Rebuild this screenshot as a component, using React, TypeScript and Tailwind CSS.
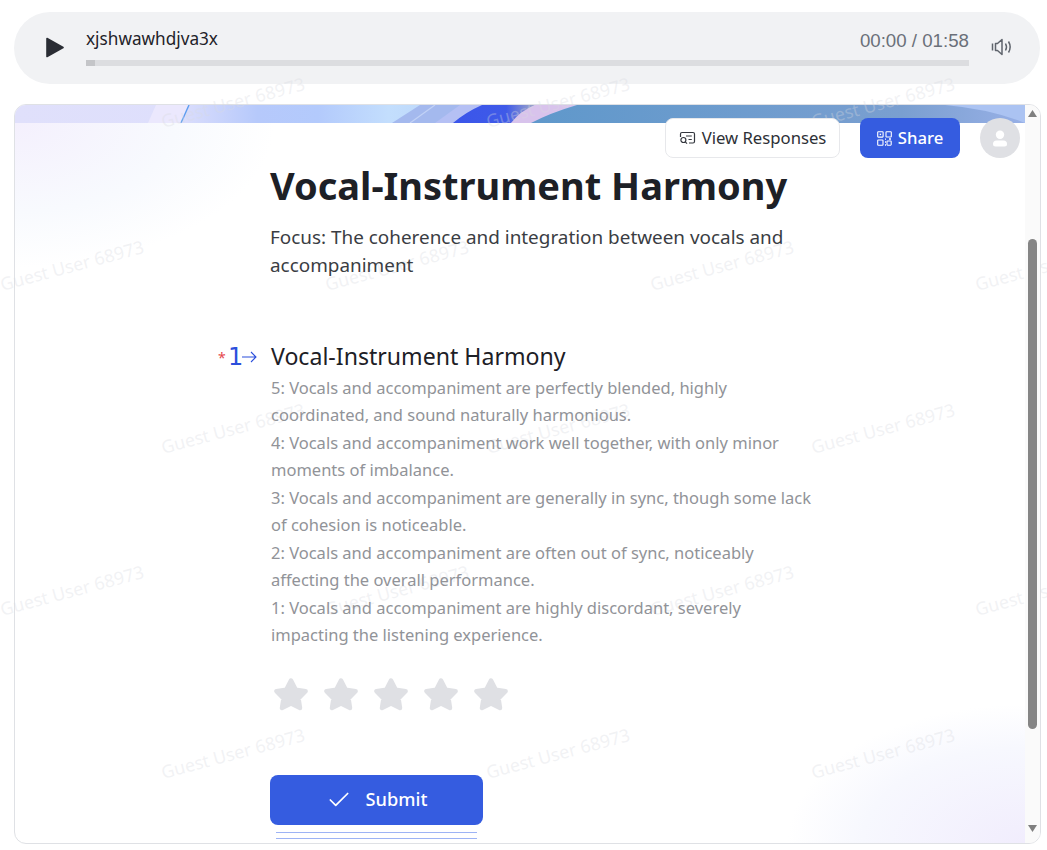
import { Check } from "lucide-react";

const WATERMARK_ROWS = [
  { top: 90, lefts: [159, 484, 809] },
  { top: 253, lefts: [-2, 323, 648, 973] },
  { top: 416, lefts: [159, 484, 809] },
  { top: 578, lefts: [-2, 323, 648, 973] },
  { top: 741, lefts: [159, 484, 809] },
];

const SCALE_LINES = [
  "5: Vocals and accompaniment are perfectly blended, highly coordinated, and sound naturally harmonious.",
  "4: Vocals and accompaniment work well together, with only minor moments of imbalance.",
  "3: Vocals and accompaniment are generally in sync, though some lack of cohesion is noticeable.",
  "2: Vocals and accompaniment are often out of sync, noticeably affecting the overall performance.",
  "1: Vocals and accompaniment are highly discordant, severely impacting the listening experience.",
];

function Watermarks() {
  return (
    <div className="pointer-events-none absolute inset-0 z-20 overflow-hidden">
      {WATERMARK_ROWS.map((row) =>
        row.lefts.map((left) => (
          <span
            key={`${row.top}-${left}`}
            className="absolute -rotate-[15deg] whitespace-nowrap text-[17.8px] leading-6 text-[#d8dae0]/35"
            style={{ top: row.top, left }}
          >
            Guest User 68973
          </span>
        ))
      )}
    </div>
  );
}

function Banner() {
  return (
    <svg className="block h-[18px] w-full" viewBox="0 0 1010 18" preserveAspectRatio="none">
      <defs>
        <linearGradient id="bannerGrad" x1="0" x2="1" y1="0" y2="0">
          <stop offset="0" stopColor="#e0e0fb" />
          <stop offset="0.16" stopColor="#dedffc" />
          <stop offset="0.24" stopColor="#b6c9fb" />
          <stop offset="0.3" stopColor="#b3cafc" />
          <stop offset="0.37" stopColor="#c3defd" />
          <stop offset="0.45" stopColor="#b9d4f8" />
        </linearGradient>
        <linearGradient id="bannerBlue" x1="0" x2="1" y1="0" y2="0">
          <stop offset="0" stopColor="#5f98cb" />
          <stop offset="0.75" stopColor="#7a9fd0" />
          <stop offset="1" stopColor="#98b0e6" />
        </linearGradient>
        <linearGradient id="bannerInk" x1="0" x2="1" y1="0" y2="0">
          <stop offset="0" stopColor="#3a55ea" />
          <stop offset="0.65" stopColor="#3f5ae8" />
          <stop offset="1" stopColor="#a3a9c8" />
        </linearGradient>
      </defs>
      <rect width="1010" height="18" fill="url(#bannerGrad)" />
      <path d="M133 18 L141 0 L174 0 L166 18Z" fill="#ebe8fd" />
      <path d="M166 18 L174 0" stroke="#5d9df0" strokeWidth="1.4" />
      <path d="M377 18 L405 0 L480 0 L440 18Z" fill="#a4b9ee" />
      <path d="M395 18 L420 0" stroke="#c2d2f6" strokeWidth="1.2" />
      <path d="M420 18 L445 0 L480 0 L445 18Z" fill="#b5c0f4" />
      <path d="M438 18 Q451 7 467 0 L520 0 Q508 6 500 18Z" fill="url(#bannerInk)" />
      <path d="M496 18 Q505 6 520 0 L562 0 Q535 8 520 18Z" fill="#d8c3ec" />
      <path d="M516 18 Q535 8 562 0 L1010 0 L1010 18Z" fill="url(#bannerBlue)" />
      <path d="M930 0 Q975 4 1010 18 L1010 0Z" fill="#abc3f2" />
    </svg>
  );
}

function ScrollBar() {
  return (
    <div className="relative z-30 flex w-[15px] shrink-0 flex-col items-center bg-[#fafafa]">
      <svg className="mt-[5px] shrink-0" width="9" height="8" viewBox="0 0 9 8">
        <path d="M4.5 0 L9 7 L0 7Z" fill="#7f7f7f" />
      </svg>
      <div className="mt-[121px] h-[490px] w-[9px] shrink-0 rounded-full bg-[#858585]" />
      <svg className="mt-[95px] shrink-0" width="9" height="8" viewBox="0 0 9 8">
        <path d="M0 1 L9 1 L4.5 8Z" fill="#7f7f7f" />
      </svg>
    </div>
  );
}

function ReviewIcon() {
  return (
    <svg width="17" height="17" viewBox="0 0 17 17" fill="none" stroke="#33363d" strokeWidth="1.2">
      <path d="M1.5 7 V4 Q1.5 2.5 3 2.5 H14 Q15.5 2.5 15.5 4 V11.5 Q15.5 13 14 13 H10" />
      <circle cx="4.4" cy="10" r="2.5" />
      <path d="M6.3 11.9 L8 13.6" />
      <path d="M7 6 H12.8 M9.5 9.5 H12.8" />
    </svg>
  );
}

function QrIcon() {
  return (
    <svg width="15" height="15" viewBox="0 0 15 15" fill="none" stroke="#ffffff" strokeWidth="1.1">
      <rect x="0.7" y="0.7" width="5.4" height="5.4" rx="0.6" />
      <rect x="2.7" y="2.7" width="1.4" height="1.4" fill="#ffffff" stroke="none" />
      <rect x="9" y="0.7" width="5.3" height="5.3" rx="0.6" />
      <rect x="0.7" y="9" width="5.3" height="5.3" rx="0.6" />
      <rect x="10" y="10" width="4.2" height="4.2" rx="0.6" />
      <path d="M8 8.2 H9 M8 11 H9 M8 14 H9 M12 8 H14" strokeWidth="1.3" />
    </svg>
  );
}

function VolumeIcon() {
  return (
    <svg width="22" height="22" viewBox="0 0 22 22" fill="none" stroke="#5f646c" strokeWidth="1.5">
      <path d="M1.5 7.5 V14.5" />
      <path d="M4.5 7.5 H6.5 L11 3.5 V18.5 L6.5 14.5 H4.5Z" strokeLinejoin="round" />
      <path d="M14.5 7.5 Q16.5 11 14.5 14.5" />
      <path d="M17.5 5.5 Q20.8 11 17.5 16.5" />
    </svg>
  );
}

function Star() {
  return (
    <svg width="40" height="40" viewBox="0 0 40 40">
      <path
        d="M20 6.5 L24.6 15.6 L34.6 17.2 L27.5 24.4 L29 34 L20 29.6 L11 34 L12.5 24.4 L5.4 17.2 L15.4 15.6Z"
        fill="#dfe0e4"
        stroke="#dfe0e4"
        strokeWidth="4.5"
        strokeLinejoin="round"
      />
    </svg>
  );
}

export default function App() {
  return (
    <main className="relative flex h-[850px] w-full flex-col overflow-hidden bg-white px-[14px] pt-3 font-['Noto_Sans',sans-serif]">

      {/* AUDIO BAR */}

      <section className="flex h-[72px] w-[1026px] shrink-0 items-center rounded-[36px] bg-[#f1f2f4] pl-[32px] pr-[27px]">
        <svg className="mb-[2px] shrink-0" width="18" height="21" viewBox="0 0 18 21">
          <path d="M1 1.5 L17 10.5 L1 19.5Z" fill="#2a2d34" stroke="#2a2d34" strokeWidth="1.6" strokeLinejoin="round" />
        </svg>
        <div className="ml-[22px] flex min-w-0 flex-1 flex-col self-start pt-[15px]">
          <div className="flex h-6 items-center justify-between">
            <span className="text-[17.2px] leading-6 text-[#1f2329]">xjshwawhdjva3x</span>
            <span className="pt-[3px] font-['Liberation_Sans',sans-serif] text-[18.7px] leading-6 text-[#6a7079]">00:00 / 01:58</span>
          </div>
          <div className="mt-[9px] h-[6px] w-full bg-[#dcdde0]">
            <div className="h-full w-[9px] bg-[#c4c5c8]" />
          </div>
        </div>
        <div className="mb-[2px] ml-[22px] shrink-0">
          <VolumeIcon />
        </div>
      </section>

      {/* FORM PANEL */}

      <section className="relative mt-5 flex h-[740px] w-[1027px] shrink-0 overflow-hidden rounded-xl border border-[#dfe1e5] bg-white">
        <div className="relative min-w-0 flex-1 overflow-hidden">
          <Banner />

          <div className="absolute left-0 top-[18px] h-[150px] w-[270px] bg-[radial-gradient(ellipse_at_top_left,#f4f0fd_0%,#f8fafe_42%,#ffffff_68%)]" />
          <div className="absolute bottom-0 right-0 h-[140px] w-[240px] bg-[radial-gradient(ellipse_at_bottom_right,#f1edfd_0%,#f7f8fe_48%,#ffffff_70%)]" />

          {/* TOP ACTIONS */}

          <div className="absolute right-[5px] top-[13px] z-30 flex items-center">
            <button className="flex h-10 w-[175px] items-center justify-center gap-[6px] rounded-lg border border-[#e7e8eb] bg-white text-[16.7px] text-[#2d3036]">
              <ReviewIcon />
              View Responses
            </button>
            <button className="ml-5 flex h-10 w-[100px] items-center justify-center gap-[6px] rounded-lg bg-[#355ce0] text-[16.7px] font-medium text-white">
              <QrIcon />
              Share
            </button>
            <div className="ml-5 flex h-10 w-10 items-center justify-center rounded-full bg-[#dfe0e4]">
              <svg width="16" height="17" viewBox="0 0 16 17" fill="#ffffff">
                <circle cx="8" cy="4.8" r="4.2" />
                <path d="M1 14 Q1 10.5 4.5 10.5 H11.5 Q15 10.5 15 14 Q15 16.5 12.5 16.5 H3.5 Q1 16.5 1 14Z" />
              </svg>
            </div>
          </div>

          {/* FORM BODY */}

          <div className="relative z-30 ml-[255px] w-[560px] pt-[39px]">
            <h1 className="text-[38px] font-bold leading-[46px] text-[#1d2026]">Vocal-Instrument Harmony</h1>
            <p className="mt-[15px] w-[530px] text-[18.9px] leading-7 text-[#3a3d43]">
              Focus: The coherence and integration between vocals and accompaniment
            </p>

            <div className="relative mt-[60px] pl-px">
              <div className="absolute -left-[52px] top-0 flex h-9 items-center text-[#2b4fdc]">
                <span className="mt-[2px] w-[10px] text-sm text-[#e5484d]">*</span>
                <span className="w-[14px] font-['DejaVu_Sans',sans-serif] text-[24px] leading-none">1</span>
                <svg width="15" height="12" viewBox="0 0 15 12" fill="none" stroke="#2b4fdc" strokeWidth="1.1">
                  <path d="M0 6 H14 M9 1 L14 6 L9 11" />
                </svg>
              </div>
              <h2 className="text-[23.1px] leading-[35px] text-[#1d2026]">Vocal-Instrument Harmony</h2>
              <div className="w-[548px] text-[16.5px] leading-[27.45px] text-[#919398]">
                {SCALE_LINES.map((line) => (
                  <p key={line}>{line}</p>
                ))}
              </div>

              <div className="mt-[25px] flex gap-[10px]">
                <Star />
                <Star />
                <Star />
                <Star />
                <Star />
              </div>
            </div>

            <button className="mt-[61px] flex h-[50px] w-[213px] items-center justify-center gap-[14px] rounded-lg bg-[#355ce0] pt-px text-[18.2px] font-medium text-white">
              <Check size={26} strokeWidth={1.6} />
              Submit
            </button>
            <div className="ml-[6px] mt-[7px] flex h-[7px] w-[201px] flex-col justify-between">
              <div className="h-px bg-[#9db3f5]" />
              <div className="h-px bg-[#9db3f5]" />
            </div>
          </div>
        </div>

        <ScrollBar />
      </section>

      <Watermarks />

    </main>
  );
}
